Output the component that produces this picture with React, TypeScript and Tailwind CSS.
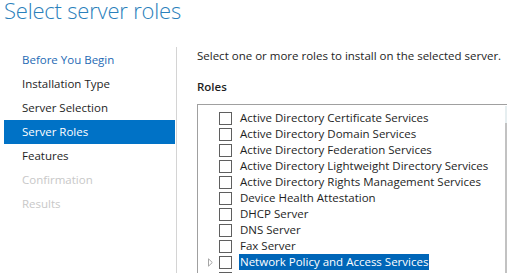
const steps = [
  { label: 'Before You Begin', state: 'link' },
  { label: 'Installation Type', state: 'done' },
  { label: 'Server Selection', state: 'done' },
  { label: 'Server Roles', state: 'current' },
  { label: 'Features', state: 'done' },
  { label: 'Confirmation', state: 'disabled' },
  { label: 'Results', state: 'disabled' },
];

const roles = [
  'Active Directory Certificate Services',
  'Active Directory Domain Services',
  'Active Directory Federation Services',
  'Active Directory Lightweight Directory Services',
  'Active Directory Rights Management Services',
  'Device Health Attestation',
  'DHCP Server',
  'DNS Server',
  'Fax Server',
  'Network Policy and Access Services',
  'Print and Document Services',
];

function stepClass(state: string) {
  if (state === 'current') return 'bg-[#0072c6] text-white';
  if (state === 'link') return 'text-[#1e6ab4]';
  if (state === 'disabled') return 'text-[#c8c8c8]';
  return 'text-[#1e1e1e]';
}

export default function App() {
  return (
    <div
      className="w-[507px] h-[273px] overflow-hidden bg-white flex flex-col"
      style={{ fontFamily: '"Open Sans", "Noto Sans", sans-serif' }}
    >
      {/* header */}
      <div className="h-[47px] shrink-0 pl-[4px]">
        <h1 className="text-[22px] leading-[20px] font-light text-[#2a80bb] tracking-[-0.2px]">
          Select server roles
        </h1>
      </div>

      <div className="flex flex-1 min-h-0">
        {/* wizard steps */}
        <nav className="w-[177px] shrink-0 border-r border-[#d4d4d4] pt-[1px] pl-[4px] pr-[1px]">
          {steps.map((s) => (
            <div
              key={s.label}
              className={`h-[24px] flex items-center pl-[18px] text-[11.5px] ${stepClass(s.state)}`}
            >
              {s.label}
            </div>
          ))}
        </nav>

        {/* content */}
        <div className="flex-1 min-w-0 pl-[20px] pt-[1px]">
          <p className="text-[11.5px] leading-[16px] text-[#1e1e1e] whitespace-nowrap">
            Select one or more roles to install on the selected server.
          </p>
          <p className="mt-[15px] text-[11.5px] leading-[16px] font-semibold text-[#1e1e1e]">Roles</p>

          <div className="mt-[9px] h-[200px] border-t border-l border-[#a0a0a0] relative pt-[5px]">
            <div className="absolute right-0 top-[1px] bottom-0 w-[2px] bg-[#e6eef0]">
              <div className="mt-[17px] h-[200px] bg-[#c2c2c2]" />
            </div>
            {roles.map((r, i) => {
              const selected = i === 9;
              return (
                <div key={r} className="h-[16px] flex items-center">
                  <div className="w-[21px] flex justify-center pl-[3px]">
                    {selected && (
                      <svg width="5" height="9" viewBox="0 0 5 9">
                        <path d="M0.5 0.8 L4.3 4.5 L0.5 8.2 Z" fill="none" stroke="#a6a6a6" strokeWidth="1" />
                      </svg>
                    )}
                  </div>
                  <span className="w-[13px] h-[13px] border border-[#5f5f5f] bg-white shrink-0" />
                  <span
                    className={`ml-[7px] h-[16px] px-[1px] flex items-center text-[11.5px] whitespace-nowrap ${
                      selected ? 'bg-[#0066b8] text-white' : 'text-[#1e1e1e]'
                    }`}
                  >
                    {r}
                  </span>
                </div>
              );
            })}
          </div>
        </div>
      </div>
    </div>
  );
}
